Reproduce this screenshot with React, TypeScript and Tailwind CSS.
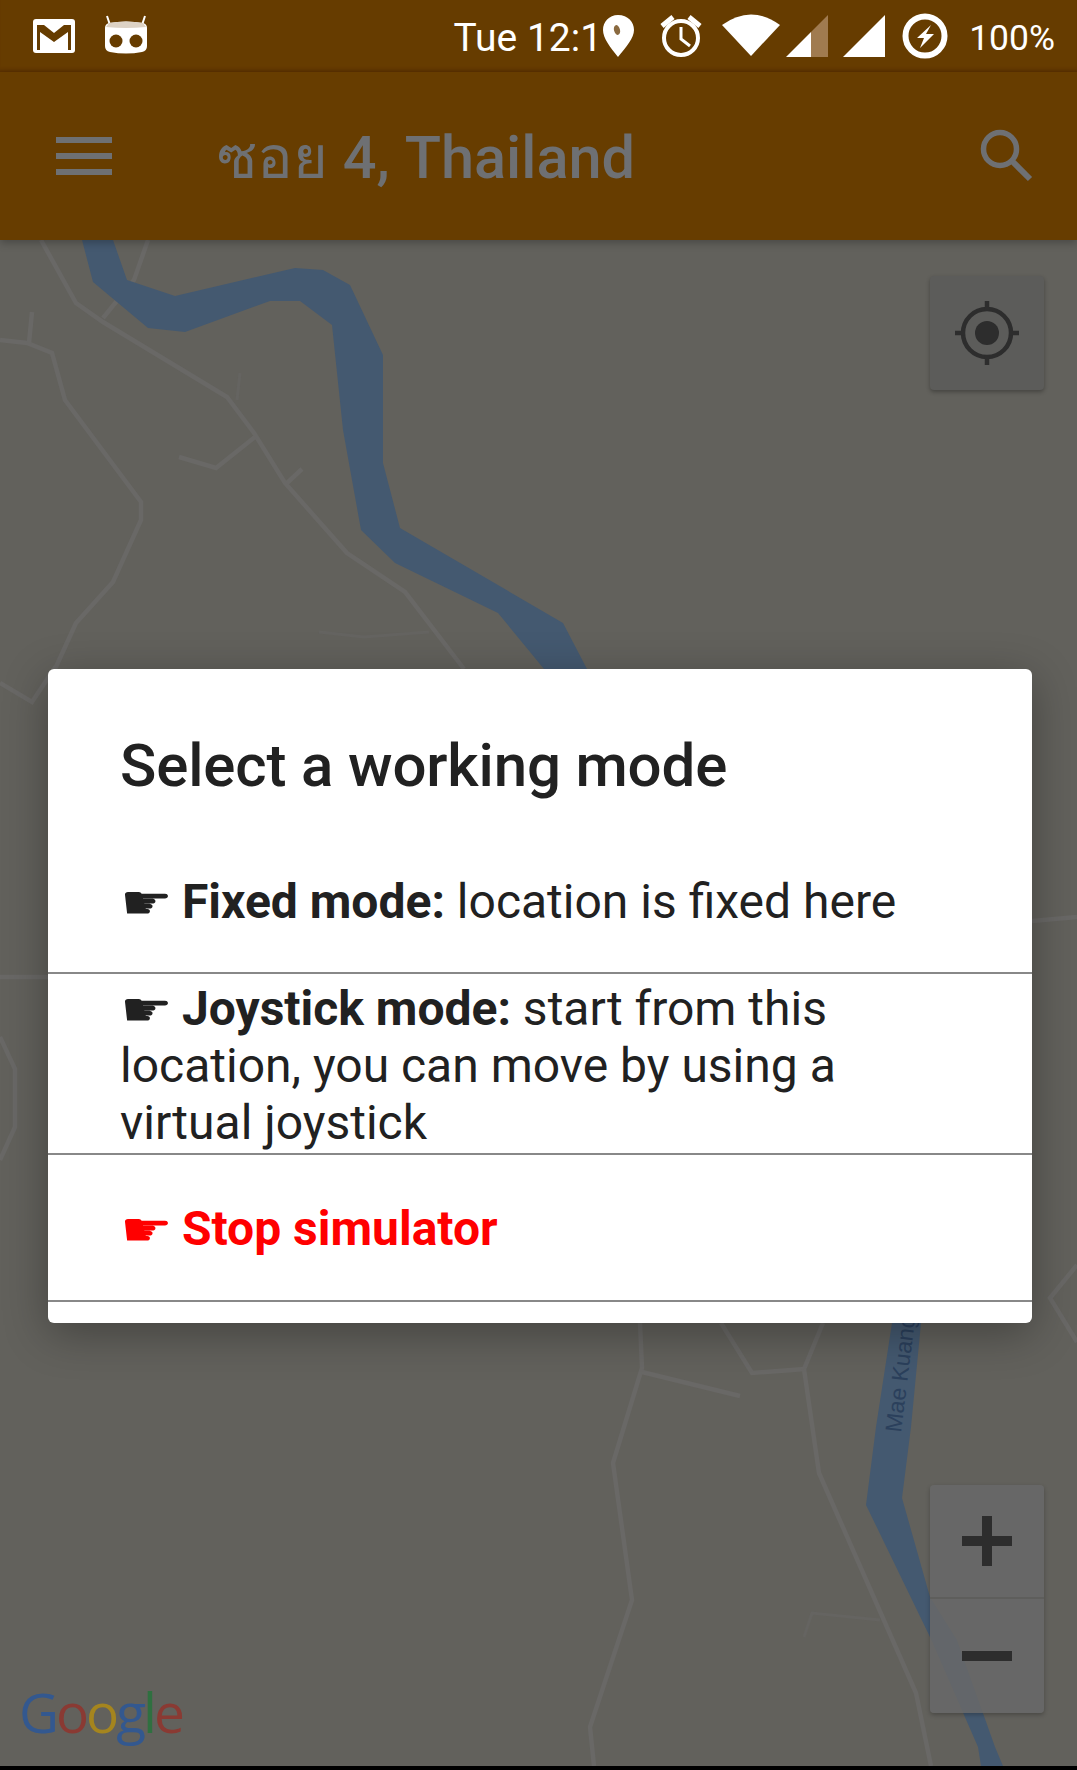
const roads = [
  "41,240 76,303 103,322 227,397 254,433 285,483 347,553 405,592 464,669",
  "148,240 134,280 103,318",
  "0,340 27,343 52,353 65,400 141,502 141,520 113,582 76,623 55,669",
  "32,312 29,343",
  "255,437 216,468 179,457",
  "302,469 287,483",
  "0,683 32,702 56,666",
  "0,977 48,977",
  "0,1037 15,1069 15,1127 0,1160",
  "1032,921 1077,917",
  "1077,1265 1050,1298 1077,1342",
  "640,1323 642,1368 613,1463 632,1600 590,1727 594,1766",
  "642,1372 740,1396",
  "721,1323 752,1373 804,1369 823,1323",
  "804,1369 819,1473 916,1693 931,1766",
];
const faint = ["240,373 237,400", "319,632 364,637 429,632", "804,1637 812,1613 880,1620"];

function MapDrawing() {
  return (
    <svg className="absolute inset-0" width="1077" height="1526" viewBox="0 240 1077 1526">
      {roads.map((p) => (
        <polyline key={p} points={p} fill="none" stroke="#696866" strokeWidth="4.5" />
      ))}
      {faint.map((p) => (
        <polyline key={p} points={p} fill="none" stroke="#656461" strokeWidth="3" />
      ))}
      <polygon
        fill="#445970"
        points="82,240 93,282 148,328 185,332 270,301 300,301 332,325 343,430 361,530 395,563 498,613 544,669 587,669 563,623 400,528 383,463 383,355 350,285 323,270 295,268 175,296 127,280 113,240"
      />
      <polygon
        fill="#445970"
        points="892,1323 876,1427 866,1505 930,1637 978,1747 981,1766 1003,1766 995,1747 957,1640 930,1597 902,1498 911,1427 921,1323"
      />
      <text
        x="0"
        y="0"
        transform="translate(901,1433) rotate(-83)"
        fill="#2b405c"
        fontSize="23"
        fontFamily="Liberation Sans, sans-serif"
      >
        Mae Kuang
      </text>
    </svg>
  );
}

function Status() {
  return (
    <div className="flex h-[72px] shrink-0 items-center justify-between bg-[#663c00] pl-[33px] pr-[22px] shadow-[inset_0_-4px_3px_-2px_#5a3000]">
      <svg width="114" height="72" viewBox="33 0 114 72" className="shrink-0">
        {/* gmail */}
        <rect x="33" y="19" width="42" height="34" rx="3" fill="#fff" />
        <path d="M37 25 L44 25 L54 33 L64 25 L71 25 L71 50 L68 50 L68 32 L54 42 L40 32 L40 50 L37 50 Z" fill="#663c00" />
        {/* cyanogen */}
        <path d="M107 16 L110 25 M145 16 L142 25" stroke="#fff" strokeWidth="2" />
        <path d="M109 23 Q126 20 143 23 Q147 24 147 28 L147 46 Q147 51 142 52 Q126 55 110 52 Q105 51 105 46 L105 28 Q105 24 109 23 Z" fill="#fff" />
        <path d="M109 23 Q126 20 143 23 L146 27 Q126 29 106 27 Z" fill="#ddd2c4" />
        <circle cx="116" cy="41" r="6.5" fill="#663c00" />
        <circle cx="136" cy="41" r="6.5" fill="#663c00" />
      </svg>
      <div className="flex items-center font-['Roboto',sans-serif] text-white">
        <span className="whitespace-nowrap pt-[4px] text-[39px] leading-[44px]">Tue 12:1</span>
        <svg width="345" height="72" viewBox="603 0 345 72" className="ml-[1px] shrink-0">
          {/* pin */}
          <path d="M618 15 C628 15 634 22 634 30 C634 38 626 47 618 57 C610 47 603 38 603 30 C603 22 609 15 618 15 Z" fill="#fff" />
          <ellipse cx="617" cy="30" rx="3" ry="5" fill="#8a6a40" transform="rotate(-15 617 30)" />
          {/* alarm */}
          <circle cx="681" cy="38" r="17" fill="none" stroke="#fff" strokeWidth="4" />
          <path d="M681 27 L681 39 L690 46" fill="none" stroke="#fff" strokeWidth="3" />
          <path d="M662 26 L673 17 M700 26 L689 17" stroke="#fff" strokeWidth="5" />
          {/* wifi */}
          <path d="M722 25 Q751 4 780 25 L751 56 Z" fill="#fff" />
          {/* signal */}
          <path d="M828 15 L828 57 L811 57 L811 32 Z" fill="#a07b50" />
          <path d="M811 32 L811 57 L786 57 Z" fill="#fff" />
          <path d="M885 15 L885 57 L843 57 Z" fill="#fff" />
          {/* battery */}
          <circle cx="925" cy="36" r="19.5" fill="none" stroke="#fff" strokeWidth="6" />
          <path d="M931 25 L917 38 L924 38 L920 48 L934 34 L926 34 Z" fill="#fff" />
        </svg>
        <span className="ml-[21px] whitespace-nowrap pt-[5px] text-[35.5px] leading-[41px]">100%</span>
      </div>
    </div>
  );
}

function AppBar() {
  return (
    <div className="relative z-10 flex h-[168px] shrink-0 items-center bg-[#673d00] pl-[56px] pr-[44px] shadow-[0_3px_8px_rgba(0,0,0,0.25)]">
      <div className="flex w-[56px] shrink-0 flex-col gap-[10px]">
        <div className="h-[6px] bg-[#6e7073]" />
        <div className="h-[6px] bg-[#6e7073]" />
        <div className="h-[6px] bg-[#6e7073]" />
      </div>
      <div className="ml-[105px] flex-1 whitespace-nowrap pt-[4px] font-['Roboto','Noto_Sans','DejaVu_Sans',sans-serif] text-[59.5px] font-medium leading-[70px] text-[#6e7073]">
        ซอย 4, Thailand
      </div>
      <svg width="54" height="54" viewBox="0 0 54 54" className="shrink-0">
        <circle cx="21" cy="20" r="16.5" fill="none" stroke="#6e7073" strokeWidth="5.5" />
        <path d="M33 32 L51 50" stroke="#6e7073" strokeWidth="6" />
      </svg>
    </div>
  );
}

function Hand({ red }: { red?: boolean }) {
  return (
    <span
      className={`inline-block w-[50px] origin-bottom scale-y-[0.8] align-[-5px] font-['DejaVu_Sans',sans-serif] text-[59px] font-normal leading-[0] ${
        red ? "text-[#f00]" : "text-[#212121]"
      }`}
    >
      ☛
    </span>
  );
}

function Dialog() {
  return (
    <div className="w-full rounded-[6px] bg-white font-['Roboto',sans-serif] text-[48px] leading-[57px] text-[#212121] shadow-[0_10px_45px_rgba(0,0,0,0.32)]">
      <div className="h-[158px] pl-[72px] pt-[62px] text-[60px] font-medium leading-[70px] tracking-[-0.15px]">
        Select a working mode
      </div>
      <div className="h-[147px] border-b-2 border-[#888888] pl-[72px] pr-[60px] pt-[46px]">
        <Hand /> <b className="font-bold">Fixed mode:</b> location is fixed here
      </div>
      <div className="h-[181px] border-b-2 border-[#888888] pl-[72px] pr-[100px] pt-[6px]">
        <Hand /> <b className="font-bold">Joystick mode:</b> start from this location, you can move by using a virtual joystick
      </div>
      <div className="h-[147px] border-b-2 border-[#888888] pl-[72px] pr-[60px] pt-[45px] font-bold text-[#f00]">
        <Hand red /> Stop simulator
      </div>
      <div className="h-[21px]" />
    </div>
  );
}

function MapControls() {
  return (
    <div className="absolute inset-y-0 right-[33px] flex w-[114px] flex-col justify-between pb-[53px] pt-[36px]">
      <div className="flex h-[114px] items-center justify-center rounded-[4px] bg-[#5c5c5a] shadow-[0_2px_4px_rgba(0,0,0,0.3)]">
        <svg width="66" height="66" viewBox="0 0 66 66">
          <circle cx="33" cy="33" r="24" fill="none" stroke="#2d2d2d" strokeWidth="4.5" />
          <circle cx="33" cy="33" r="12" fill="#2d2d2d" />
          <path d="M33 1 V11 M33 55 V65 M1 33 H11 M55 33 H65" stroke="#2d2d2d" strokeWidth="4.5" />
        </svg>
      </div>
      <div className="flex h-[228px] flex-col rounded-[4px] bg-[#686868]/85 shadow-[0_2px_4px_rgba(0,0,0,0.25)]">
        <div className="flex h-[114px] items-center justify-center border-b-2 border-[#5e5e5c]">
          <svg width="50" height="50" viewBox="0 0 50 50">
            <path d="M0 25 H50 M25 0 V50" stroke="#2d2d2d" strokeWidth="10" />
          </svg>
        </div>
        <div className="flex flex-1 items-center justify-center">
          <div className="h-[10px] w-[50px] bg-[#2d2d2d]" />
        </div>
      </div>
    </div>
  );
}

export default function App() {
  return (
    <div className="flex h-[1770px] w-[1077px] flex-col overflow-hidden bg-black">
      <Status />
      <AppBar />
      <main className="relative mb-[4px] flex-1 overflow-hidden bg-[#62615c]">
        <MapDrawing />
        <MapControls />
        <div className="absolute bottom-[17px] left-[19px] whitespace-nowrap font-['Open_Sans',sans-serif] text-[55px] font-medium leading-[74px] tracking-[-3px]">
          <span className="text-[#33588f]">G</span>
          <span className="text-[#8a3a33]">o</span>
          <span className="text-[#a5851e]">o</span>
          <span className="text-[#33588f]">g</span>
          <span className="text-[#2f7040]">l</span>
          <span className="text-[#8a3a33]">e</span>
        </div>
        <div className="absolute inset-0 flex items-center pb-[14px] pl-[48px] pr-[45px]">
          <Dialog />
        </div>
      </main>
    </div>
  );
}
